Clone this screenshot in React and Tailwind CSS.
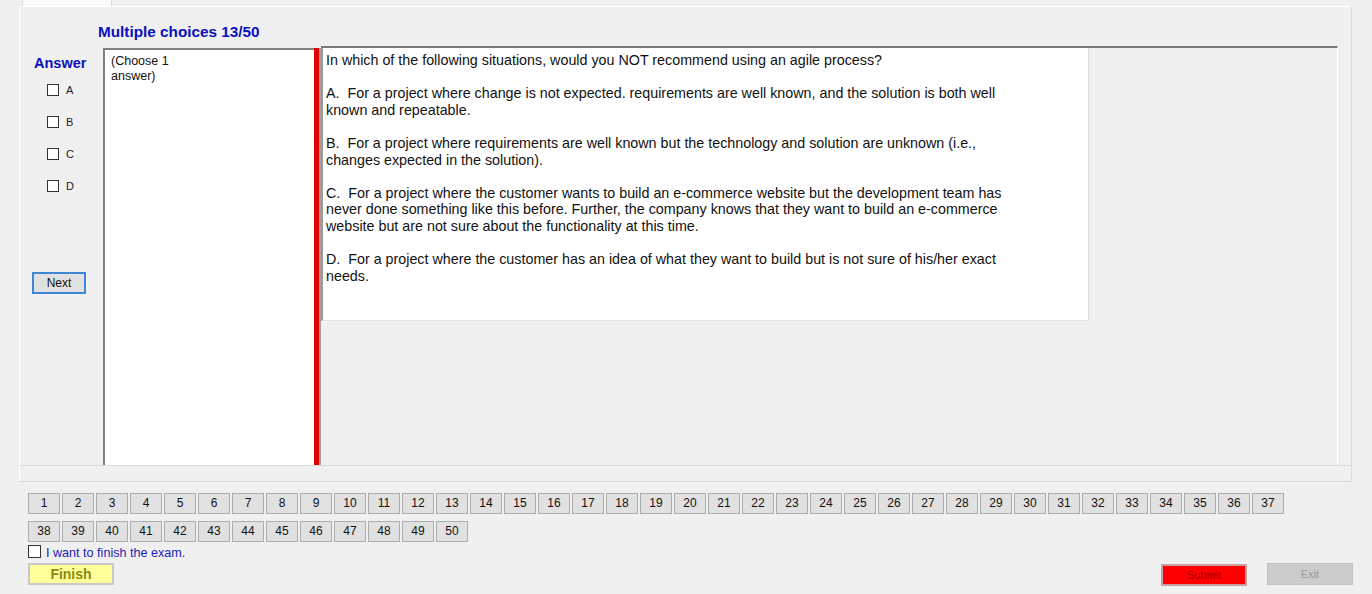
import React from "react";

const question = [
  "In which of the following situations, would you NOT recommend using an agile process?",
  "",
  "A.  For a project where change is not expected. requirements are well known, and the solution is both well",
  "known and repeatable.",
  "",
  "B.  For a project where requirements are well known but the technology and solution are unknown (i.e.,",
  "changes expected in the solution).",
  "",
  "C.  For a project where the customer wants to build an e-commerce website but the development team has",
  "never done something like this before. Further, the company knows that they want to build an e-commerce",
  "website but are not sure about the functionality at this time.",
  "",
  "D.  For a project where the customer has an idea of what they want to build but is not sure of his/her exact",
  "needs.",
];

const nums = Array.from({ length: 50 }, (_, i) => i + 1);

function NumButton({ n }) {
  return (
    <button className="w-[32px] h-[21px] bg-[#e1e1e1] border border-[#adadad] text-[12px] leading-[19px] text-[#111] text-center">
      {n}
    </button>
  );
}

export default function App() {
  return (
    <div className="w-[1372px] h-[594px] bg-[#f0f0f0] overflow-hidden font-['Liberation_Sans',Arial,sans-serif]">
      {/* tab header */}
      <div className="h-[6px] flex">
        <div className="ml-[22px] w-[90px] h-[6px] bg-[#fafafa] border-x border-[#d9d9d9]" />
      </div>

      {/* tab page */}
      <div className="ml-[19px] w-[1333px] h-[476px] border border-[#dadada] border-t-white border-l-white flex flex-col">
        <div className="h-[41px] pl-[78px] pt-[13px]">
          <span className="text-[15.3px] font-bold text-[#0a10c0] leading-[18px]">Multiple choices 13/50</span>
        </div>

        <div className="flex h-[418px] border-b border-[#dcdcdc]">
          {/* answer column */}
          <div className="w-[83px] flex flex-col">
            <div className="pl-[14px] pt-[6px] text-[14.5px] font-bold text-[#0a10c0] leading-[18px]">Answer</div>
            <div className="flex flex-col gap-[20px] pt-[12px] pl-[27px]">
              {["A", "B", "C", "D"].map((l) => (
                <label key={l} className="flex items-center gap-[7px] h-[12px]">
                  <span className="w-[12px] h-[12px] border border-[#333] bg-white" />
                  <span className="text-[11px] text-[#222] leading-[12px]">{l}</span>
                </label>
              ))}
            </div>
            <button className="ml-[12px] mt-[80px] w-[54px] h-[22px] bg-[#e1e1e1] border-2 border-[#3d87d4] text-[12px] text-[#111] leading-[18px]">
              Next
            </button>
          </div>

          {/* choose box */}
          <div className="w-[211px] bg-white border-l-2 border-t-2 border-[#808080] pl-[6px] pt-[4px] text-[12.5px] leading-[15px] text-[#111]">
            (Choose 1
            <br />
            answer)
          </div>

          {/* red splitter */}
          <div className="w-[5px] bg-[#e00000]" />
          <div className="w-[2px] bg-[#a0a0a0]" />

          {/* question panel */}
          <div className="w-[1017px] border-t-2 border-[#7a7a7a] border-r border-r-white -mt-[2px] flex items-start">
            <div className="w-[768px] h-[273px] bg-white border-l-2 border-[#9a9a9a] border-r border-r-[#dcdcdc] border-b border-b-[#e6e6e6] pl-[3px] pt-[4px]">
              {question.map((line, i) => (
                <div key={i} className="text-[14.3px] leading-[16.6px] h-[16.6px] text-[#111] whitespace-pre">
                  {line}
                </div>
              ))}
            </div>
          </div>
        </div>
      </div>

      {/* number buttons */}
      <div className="pl-[28px] pt-[11px] w-[1300px] flex flex-wrap gap-x-[2px] gap-y-[7px]">
        {nums.map((n) => (
          <NumButton key={n} n={n} />
        ))}
      </div>

      <div className="pl-[28px] pt-[3px] flex items-center gap-[5px] h-[15px]">
        <span className="w-[13px] h-[13px] border border-[#333] bg-white" />
        <span className="text-[12.6px] text-[#1c1cb4] leading-[14px] mt-[3px]">I want to finish the exam.</span>
      </div>

      <div className="flex items-start pt-[6px]">
        <button className="ml-[28px] w-[86px] h-[22px] bg-[#ffff99] border-2 border-[#c8c8c8] text-[14px] font-bold text-[#8a8a10] leading-[18px]">
          Finish
        </button>
        <button className="ml-[1047px] mt-[1px] w-[86px] h-[22px] bg-[#ff0000] border-2 border-[#c9a0a0] text-[11px] text-[#a00000] leading-[18px]">
          Submit
        </button>
        <button className="ml-[20px] w-[86px] h-[22px] bg-[#cccccc] border border-[#c4c4c4] text-[11px] text-[#9a9a9a] leading-[20px]">
          Exit
        </button>
      </div>
    </div>
  );
}
